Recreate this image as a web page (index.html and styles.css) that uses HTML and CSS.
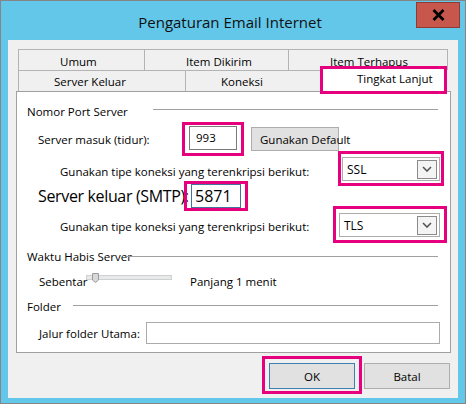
FILE: index.html
```html
<!DOCTYPE html>
<html>
<head>
<meta charset="utf-8">
<title>Pengaturan Email Internet</title>
<link rel="stylesheet" href="styles.css">
</head>
<body>
<div class="window">
  <div class="titlebar">
    <div class="title">Pengaturan Email Internet</div>
    <div class="close">
      <svg width="13" height="12" viewBox="0 0 13 12"><path d="M1.5 1 L11.5 11 M11.5 1 L1.5 11" stroke="#000" stroke-width="2.8" fill="none"/></svg>
    </div>
  </div>

  <div class="client">
    <div class="tabrow back">
      <div class="tab t-umum">Umum</div>
      <div class="tab t-kirim">Item Dikirim</div>
      <div class="tab t-hapus">Item Terhapus</div>
    </div>
    <div class="tabrow front">
      <div class="tab t-keluar">Server Keluar</div>
      <div class="tab t-koneksi">Koneksi</div>
      <div class="tab t-lanjut">Tingkat Lanjut</div>
    </div>

    <div class="panel">
      <div class="grp g-port"><span>Nomor Port Server</span><i></i></div>

      <div class="row r-masuk">
        <span class="lbl">Server masuk (tidur):</span>
        <div class="hl hl-masuk"><div class="field">993</div></div>
        <div class="btn btn-default">Gunakan Default</div>
      </div>

      <div class="row r-enc">
        <span class="lbl">Gunakan tipe koneksi yang terenkripsi berikut:</span>
        <div class="hl hl-ssl">
          <div class="combo"><span>SSL</span><b class="arrow"><svg width="10" height="6" viewBox="0 0 10 6"><path d="M1 1 L5 5 L9 1" stroke="#555" stroke-width="1.6" fill="none"/></svg></b></div>
        </div>
      </div>

      <div class="row r-smtp">
        <span class="lbl">Server keluar (SMTP):</span>
        <div class="hl hl-smtp"><div class="field focus">5871</div></div>
      </div>

      <div class="row r-enc r-enc2">
        <span class="lbl">Gunakan tipe koneksi yang terenkripsi berikut:</span>
        <div class="hl hl-tls">
          <div class="combo"><span>TLS</span><b class="arrow"><svg width="10" height="6" viewBox="0 0 10 6"><path d="M1 1 L5 5 L9 1" stroke="#555" stroke-width="1.6" fill="none"/></svg></b></div>
        </div>
      </div>

      <div class="grp g-waktu"><span>Waktu Habis Server</span><i></i></div>

      <div class="row r-slider">
        <span class="lbl">Sebentar</span>
        <div class="slider">
          <div class="track"></div>
          <svg class="thumb" width="7" height="10" viewBox="0 0 7 10"><path d="M0.5 0.5 H6.5 V7 L3.5 9.5 L0.5 7 Z" fill="#d8d8d8" stroke="#9a9a9a"/></svg>
        </div>
        <span class="lbl-long">Panjang 1 menit</span>
      </div>

      <div class="grp g-folder"><span>Folder</span><i></i></div>

      <div class="row r-jalur">
        <span class="lbl">Jalur folder Utama:</span>
        <div class="field wide"></div>
      </div>
    </div>

    <div class="buttons">
      <div class="hl hl-ok"><div class="btn btn-ok">OK</div></div>
      <div class="btn btn-batal">Batal</div>
    </div>
  </div>
</div>
</body>
</html>
```

FILE: styles.css
```css
* {box-sizing: border-box}

body {
 margin: 0;
 font-family: "Open Sans", "Noto Sans", sans-serif;
 font-size: 11.5px;
 color: #000;
}

.window {
 width: 466px;
 height: 404px;
 border: 1px solid #858585;
 background: #63c7e9;
 padding: 0 7px 5px 7px;
}

/* title bar */
.titlebar {
 display: flex;
 height: 39px;
}

.title {
 flex: 1;
 padding-left: 36px;
 text-align: center;
 font-size: 15px;
 line-height: 42px;
 color: #111;
}

.close {
 width: 44px;
 height: 26px;
 margin-top: 1px;
 margin-right: -2px;
 background: #c7574c;
 border: 1px solid #8e3b33;
 display: flex;
 align-items: center;
 justify-content: center;
}

/* client area */
.client {
 height: 358px;
 background: #f0f0f0;
 padding: 9px 7px 0 8px;
}

.tabrow {
 display: flex;
 margin-left: 2px;
}

.tab {
 height: 21px;
 border: 1px solid #b4b4b4;
 border-bottom: none;
 background: #f0f0f0;
 line-height: 15px;
 white-space: nowrap;
}

.back .tab {
 padding: 4px 0 0 41px;
}

.front .tab {
 padding: 3px 0 0 35px;
}

.tab + .tab {
 margin-left: -1px;
}

.t-umum {width: 127px}
.t-kirim {width: 145px}
.t-hapus {width: 160px}
.t-keluar {width: 168px}
.t-koneksi {width: 138px}

.front .t-lanjut {
 position: relative;
 z-index: 1;
 width: 127px;
 height: 28px;
 margin: -4px 0 -3px -3px;
 border: 3px solid #e6007e;
 background: #fff;
 padding: 2px 0 0 34px;
}

/* tab page */
.panel {
 width: 435px;
 height: 262px;
 background: #fff;
 border: 1px solid #a0a0a0;
 padding: 0 12px 0 10px;
 display: flex;
 flex-direction: column;
}

.grp {
 display: flex;
 height: 16px;
 line-height: 16px;
 flex-shrink: 0;
 white-space: nowrap;
}

.grp span {flex-shrink: 0}

.grp i {
 flex: 1;
 height: 0;
 border-top: 1px solid #a0a0a0;
}

.g-port {margin-top: 12px}
.g-port span {width: 126px}
.g-port i {margin-top: 5px}

.g-waktu {margin-top: 6px}
.g-waktu span {width: 100px}
.g-waktu i {margin-top: 7px}

.g-folder {margin-top: 10px}
.g-folder span {width: 46px}
.g-folder i {margin-top: 6px}

.row {
 display: flex;
 align-items: center;
 flex-shrink: 0;
 line-height: 15px;
 white-space: nowrap;
}

.row .lbl {flex-shrink: 0}

.hl {
 border: 3px solid #e6007e;
 flex-shrink: 0;
}

.field {
 height: 24px;
 border: 1px solid #7a7a7a;
 background: #fff;
 line-height: 22px;
 padding-left: 6px;
}

.btn {
 width: 86px;
 height: 26px;
 background: #e1e1e1;
 border: 1px solid #adadad;
 display: flex;
 align-items: center;
 justify-content: center;
 white-space: nowrap;
 flex-shrink: 0;
}

/* incoming port */
.r-masuk {margin-top: 2px}
.r-masuk .lbl {margin-left: 11px; width: 144px}
.hl-masuk {padding: 1px 4px 3px 4px}
.hl-masuk .field {width: 48px}

.btn-default {
 width: 88px;
 height: 24px;
 margin-left: 7px;
 justify-content: flex-start;
 padding-left: 8px;
}

/* encryption rows */
.r-enc {
 margin-top: -5px;
 align-items: flex-start;
}

.r-enc .lbl {
 margin: 13px 0 0 33px;
}

.r-enc .hl {margin-left: auto}

.hl-ssl {
 width: 106px;
 margin-right: -6px;
 padding: 3px 1px 2px 1px;
}

.hl-tls {
 width: 114px;
 margin-right: -9px;
 padding: 4px 4px 3px 3px;
}

.r-enc2 {margin-top: -5px}

.combo {
 height: 24px;
 border: 1px solid #acacac;
 background: #fff;
 display: flex;
 align-items: center;
 padding-left: 4px;
 font-size: 12px;
}

.arrow {
 width: 20px;
 height: 19px;
 margin-left: auto;
 margin-right: 2px;
 border: 1px solid #8a8a8a;
 background: #f4f4f4;
 display: flex;
 align-items: center;
 justify-content: center;
}

/* outgoing port */
.r-smtp {margin-top: -5px}

.r-smtp .lbl {
 margin-left: 11px;
 width: 146px;
 font-size: 16px;
 letter-spacing: -0.35px;
 line-height: 30px;
}

.hl-smtp {
 width: 64px;
 height: 30px;
 padding: 0 4px;
}

.field.focus {
 width: 50px;
 height: 24px;
 border-color: #45729c;
 background: transparent;
 font-size: 16px;
 line-height: 22px;
 padding-left: 3px;
}

/* timeout slider */
.r-slider {
 margin-top: 8px;
 height: 16px;
 align-items: flex-start;
 line-height: 16px;
}

.r-slider .lbl {margin-left: 12px; width: 47px; margin-top: 1px}

.slider {
 position: relative;
 width: 86px;
 height: 16px;
 flex-shrink: 0;
}

.track {
 margin-top: 2px;
 height: 5px;
 border: 1px solid #d0d0d0;
 background: #e7eaea;
}

.thumb {
 position: absolute;
 left: 6px;
 top: 0;
}

.lbl-long {margin-left: 18px; margin-top: 1px}

/* folder */
.r-jalur {margin-top: 7px}
.r-jalur .lbl {margin-left: 12px; width: 107px}

.field.wide {
 width: 294px;
 height: 22px;
 border-color: #ababab;
 margin-right: -2px;
}

/* dialog buttons */
.buttons {
 display: flex;
 justify-content: flex-end;
 align-items: flex-start;
 margin-top: 3px;
 padding-right: 1px;
}

.hl-ok {padding: 4px 4px 2px 4px}

.btn-ok {border-color: #3c7fb1}

.btn-batal {
 margin: 7px 0 0 2px;
}
```
